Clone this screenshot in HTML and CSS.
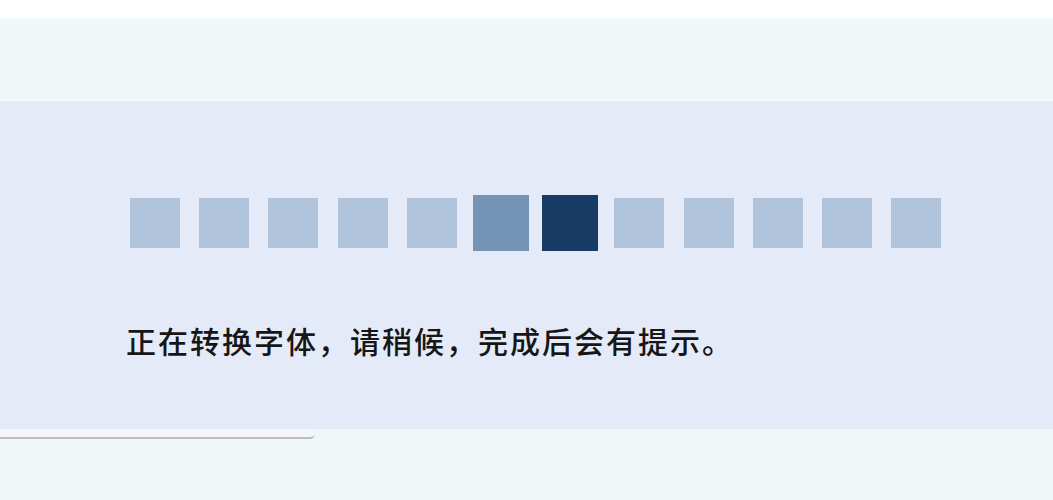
FILE: index.html
```html
<!DOCTYPE html>
<html lang="zh-CN">
<head>
<meta charset="utf-8">
<title>正在转换字体</title>
<link rel="stylesheet" href="styles.css">
</head>
<body>
<div class="top"></div>
<div class="band"></div>
<div class="panel">
  <div class="loader">
    <span class="sq"></span>
    <span class="sq"></span>
    <span class="sq"></span>
    <span class="sq"></span>
    <span class="sq"></span>
    <span class="sq sq-mid"></span>
    <span class="sq sq-active"></span>
    <span class="sq"></span>
    <span class="sq"></span>
    <span class="sq"></span>
    <span class="sq"></span>
    <span class="sq"></span>
  </div>
  <p class="msg">正在转换字体，请稍候，完成后会有提示。</p>
</div>
<div class="field"></div>
</body>
</html>
```
FILE: styles.css
```css
html, body {
  margin: 0;
  padding: 0;
  background: #f0f7f9;
  height: 100%;
  overflow: hidden;
}
.top {
  height: 17px;
  background: #ffffff;
  border-bottom: 3px solid #f7fbfb;
}
.band {
  height: 79px;
  background: #f0f7f9;
  border-bottom: 2px solid #f3f8fc;
}
.panel {
  height: 328px;
  background: #e4eaf7;
  box-sizing: border-box;
  padding: 94px 0 0 0;
}
.loader {
  display: flex;
  align-items: center;
  gap: 19.2px;
  padding-left: 130px;
  height: 56px;
}
.sq {
  display: block;
  width: 50px;
  height: 50px;
  background: #afc3db;
  flex: none;
}
.sq-mid {
  background: #7594b5;
  transform: scale(1.12);
}
.sq-active {
  background: #1a3a66;
  transform: scale(1.12);
}
.msg {
  margin: 70px 0 0 0;
  padding-left: 126px;
  font-family: "Noto Sans CJK SC", "Noto Sans", sans-serif;
  font-size: 30px;
  letter-spacing: 2px;
  line-height: 38px;
  color: #161616;
  font-weight: 500;
}
.field {
  width: 315px;
  height: 8px;
  background: #f5f6fb;
  border-bottom: 2px solid #bdbdbd;
  border-bottom-right-radius: 5px;
}
```
